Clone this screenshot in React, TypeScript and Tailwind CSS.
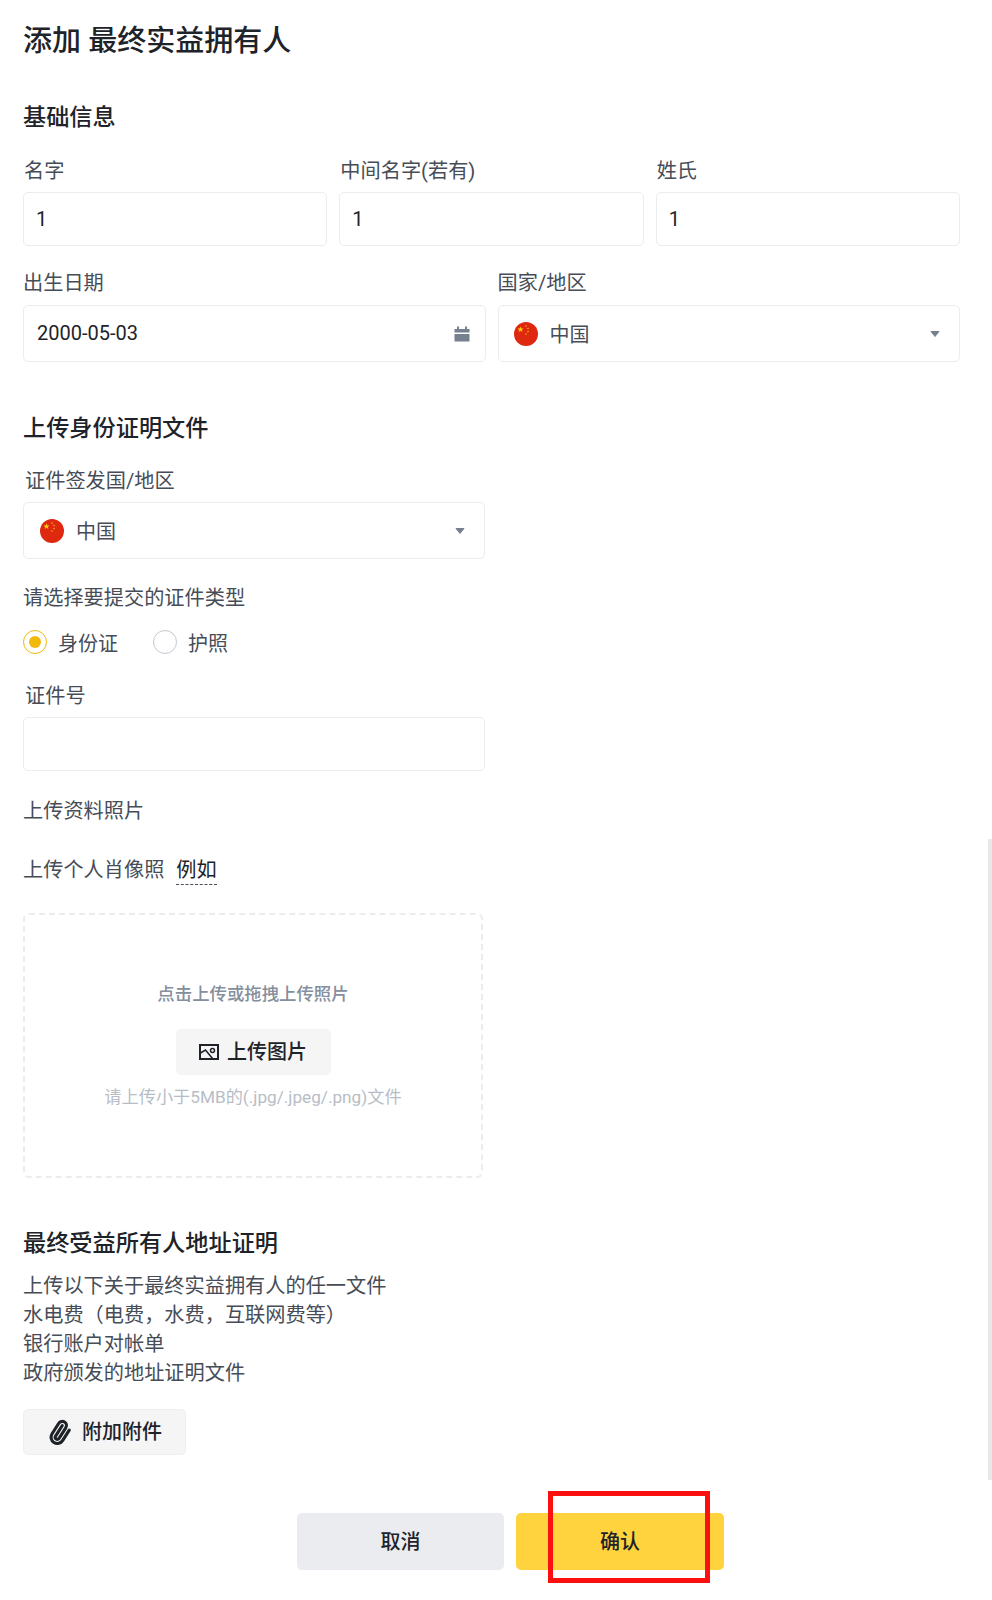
import { Paperclip } from 'lucide-react'

const labelCls = 'block h-7 text-[20.2px] leading-[30px] text-[#474d57]'
const headingCls = 'h-8 text-[23.2px] leading-[34px] font-medium text-[#1e2329]'
const boxCls = 'rounded-[5px] border border-[#eaecef] bg-white text-[20px] text-[#1e2329]'

function ChinaFlag() {
  return (
    <svg width="24" height="24" viewBox="0 0 24 24" className="shrink-0">
      <circle cx="12" cy="12" r="12" fill="#de2910" />
      <polygon points="6.5,4.5 7.3,6.6 9.5,6.6 7.8,8 8.4,10 6.5,8.8 4.6,10 5.2,8 3.5,6.6 5.7,6.6" fill="#ffcd00" />
      <circle cx="12" cy="4" r="0.7" fill="#ffcd00" />
      <circle cx="14" cy="6.5" r="0.7" fill="#ffcd00" />
      <circle cx="14" cy="9.5" r="0.7" fill="#ffcd00" />
      <circle cx="12" cy="12" r="0.7" fill="#ffcd00" />
    </svg>
  )
}

function Caret() {
  return (
    <svg width="10" height="8" viewBox="0 0 10 8" className="shrink-0">
      <path d="M1 1.5h8L5 6.5z" fill="#76808f" stroke="#76808f" strokeLinejoin="round" />
    </svg>
  )
}

function CountrySelect({ left }: { left?: boolean }) {
  return (
    <div className={`${boxCls} flex h-[57px] items-center justify-between pr-[19px] ${left ? 'pl-4' : 'pl-[15px]'}`}>
      <div className="flex items-center gap-3">
        <ChinaFlag />
        <span className="pt-[2px] text-[#474d57]">中国</span>
      </div>
      <Caret />
    </div>
  )
}

function TextBox({ value }: { value?: string }) {
  return <div className={`${boxCls} flex h-[54px] items-center px-[12px]`}>{value}</div>
}

function Named({ label, value }: { label: string; value: string }) {
  return (
    <div>
      <label className={`${labelCls} pl-px`}>{label}</label>
      <div className="mt-2">
        <TextBox value={value} />
      </div>
    </div>
  )
}

export default function App() {
  return (
    <div className="relative min-h-[1600px] overflow-hidden bg-white pl-[23px] pt-5 font-['Roboto','Noto_Sans_CJK_SC',sans-serif]">
      <h1 className="h-10 text-[29px] leading-[42px] font-medium text-[#1e2329]">添加 最终实益拥有人</h1>

      <h2 className={`${headingCls} mt-10`}>基础信息</h2>
      <div className="mt-6 grid w-[937px] grid-cols-3 gap-3">
        <Named label="名字" value="1" />
        <Named label="中间名字(若有)" value="1" />
        <Named label="姓氏" value="1" />
      </div>

      <div className="mt-[22px] grid w-[937px] grid-cols-2 gap-3">
        <div>
          <label className={labelCls}>出生日期</label>
          <div className={`${boxCls} mt-[9px] flex h-[57px] items-center justify-between pl-[13px] pr-[15px]`}>
            <span className="pb-[2px]">2000-05-03</span>
            <svg width="16" height="16" viewBox="0 0 16 16" fill="#76808f">
              <rect x="3" y="0.5" width="2" height="2.5" />
              <rect x="11" y="0.5" width="2" height="2.5" />
              <rect x="0.5" y="3" width="15" height="3.5" />
              <rect x="0.5" y="8" width="15" height="7.5" />
            </svg>
          </div>
        </div>
        <div>
          <label className={labelCls}>国家/地区</label>
          <div className="mt-[9px]">
            <CountrySelect />
          </div>
        </div>
      </div>

      <h2 className={`${headingCls} mt-[49px]`}>上传身份证明文件</h2>
      <div className="w-[462px]">
        <label className={`${labelCls} mt-[23px] pl-[2px]`}>证件签发国/地区</label>
        <div className="mt-2">
          <CountrySelect left />
        </div>

        <label className={`${labelCls} mt-6`}>请选择要提交的证件类型</label>
        <div className="mt-[17px] flex h-7 items-center text-[20px] text-[#474d57]">
          <span className="flex h-6 w-6 items-center justify-center rounded-full border border-[#f0b90b] bg-white">
            <span className="h-3 w-3 rounded-full bg-[#f0b90b]" />
          </span>
          <span className="ml-[11px] pt-[3px]">身份证</span>
          <span className="ml-[35px] h-6 w-6 rounded-full border border-[#c4c8d0] bg-white" />
          <span className="ml-[11px] pt-[3px]">护照</span>
        </div>

        <label className={`${labelCls} mt-[25px] pl-[2px]`}>证件号</label>
        <div className="mt-2">
          <TextBox />
        </div>

        <p className={`${labelCls} mt-[25px]`}>上传资料照片</p>
        <div className="mt-8 flex h-7 items-center text-[20.2px] leading-7 text-[#474d57]">
          <span>上传个人肖像照</span>
          <span className="ml-3 border-b border-dashed border-[#474d57] text-[#1e2329]">例如</span>
        </div>

        <div className="mt-[29px] flex h-[265px] w-[460px] flex-col items-center rounded-[6px] border-2 border-dashed border-[#eaecef] pt-[66px]">
          <p className="h-[26px] text-[17.4px] leading-[26px] font-medium text-[#848e9c]">点击上传或拖拽上传照片</p>
          <button className="mt-[22px] flex h-[46px] w-[155px] items-center justify-center gap-2 rounded-[5px] bg-[#f5f5f5] text-[20px] font-medium text-[#1e2329]">
            <svg width="20" height="16" viewBox="0 0 20 16" fill="none" stroke="#1e2329" strokeWidth="2">
              <rect x="1" y="1" width="18" height="14" />
              <circle cx="13.5" cy="6.5" r="2" strokeWidth="1.5" />
              <path d="M1.5 9l5-3 7 8.5" strokeWidth="1.5" />
            </svg>
            上传图片
          </button>
          <p className="mt-[9px] h-[26px] text-[17.2px] leading-[26px] text-[#b7bdc6]">请上传小于5MB的(.jpg/.jpeg/.png)文件</p>
        </div>
      </div>

      <h2 className={`${headingCls} mt-12`}>最终受益所有人地址证明</h2>
      <div className="mt-[14px] text-[20.2px] leading-[29px] text-[#474d57]">
        <p>上传以下关于最终实益拥有人的任一文件</p>
        <p>水电费（电费，水费，互联网费等）</p>
        <p>银行账户对帐单</p>
        <p>政府颁发的地址证明文件</p>
      </div>

      <button className="mt-[21px] flex h-[46px] w-[163px] items-center justify-center gap-[10px] rounded-[5px] border border-[#eeeeee] bg-[#f5f5f5] text-[20px] font-medium text-[#1e2329]">
        <Paperclip size={25} strokeWidth={3} className="-rotate-12" />
        附加附件
      </button>

      <div className="ml-[274px] mt-[58px] flex gap-3">
        <button className="h-[57px] w-[207px] rounded-[5px] bg-[#eaecef] text-[20px] font-medium text-[#1e2329]">取消</button>
        <div className="relative">
          <button className="h-[57px] w-[208px] rounded-[5px] bg-[#ffd33d] text-[20px] font-medium text-[#1e2329]">确认</button>
          <div className="absolute -top-[22px] left-[32px] h-[92px] w-[162px] border-[5px] border-[#fb0f0f]" />
        </div>
      </div>

      <div className="absolute right-0 top-[839px] h-[641px] w-1 bg-[#e8e8e8]" />
    </div>
  )
}
